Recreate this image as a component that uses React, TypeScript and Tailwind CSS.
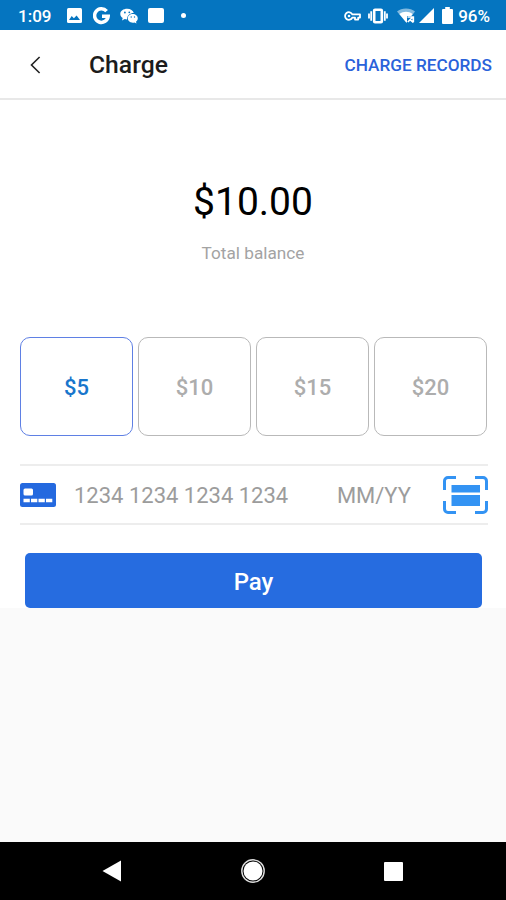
import { useState } from 'react';
import clsx from 'clsx';

const AMOUNTS = [5, 10, 15, 20];

function StatusBar() {
  return (
    <div className="flex h-[30px] items-center bg-[#0575c0] pl-[18px] pr-4 pt-px text-[17px] font-medium leading-none text-white">
      <span className="w-[49px] pt-px">1:09</span>

      {/* Notifications */}
      <svg className="mr-[11px] h-[15px] w-[15px]" viewBox="0 0 15 15" fill="none">
        <rect width="15" height="15" rx="1.5" fill="currentColor" />
        <path d="M2 12 4.7 8l2.2 2.3L9.6 7.5 13 12z" fill="#0575c0" />
      </svg>
      <svg className="mr-2.5 h-[18px] w-[17px]" viewBox="0 0 17 18" fill="none">
        <path d="M13.6 4.2A6.8 6.8 0 1 0 15.2 9.2H9" stroke="currentColor" strokeWidth="3.5" />
      </svg>
      <svg className="mr-2.5 h-4 w-[18px]" viewBox="0 0 18 16" fill="none">
        <path d="M7.2.8C3.3.8.3 3 .3 6c0 1.7.9 3.1 2.4 4.1L2 12.5l2.8-1.4c.7.2 1.5.3 2.2.3C7 7.5 10 5 13.8 5 13.1 2.5 10.5.8 7.2.8z" fill="currentColor" />
        <path d="M17.8 10.3c0-2.4-2.3-4.3-5-4.3-2.9 0-5 1.9-5 4.3s2.1 4.4 5 4.4c.6 0 1.2-.1 1.7-.3l2 1.2-.5-1.9c1.1-.8 1.8-2 1.8-3.400z" fill="currentColor" />
        <g fill="#0575c0">
          <circle cx="4.9" cy="4.5" r=".9" />
          <circle cx="9.3" cy="4.3" r=".9" />
          <circle cx="11.2" cy="9" r=".7" />
          <circle cx="14.5" cy="9" r=".7" />
        </g>
      </svg>
      <span className="mr-[17px] h-[15px] w-4 rounded-[2px] bg-white" />
      <span className="h-[5px] w-[5px] rounded-full bg-white" />

      {/* System */}
      <svg className="ml-auto mr-[7px] h-[10px] w-[17px]" viewBox="0 0 17 10" fill="none" stroke="currentColor" strokeWidth="1.8">
        <path d="M8.3 3.4A3.8 3.8 0 1 0 8.3 6.6h2.7v2h3.2v-2H16V3.4z" strokeLinejoin="round" />
        <circle cx="5" cy="5" r="1.3" fill="currentColor" stroke="none" />
      </svg>
      <svg className="mr-[9px] h-4 w-5" viewBox="0 0 20 16" fill="none" stroke="currentColor">
        <rect x="6.2" y="1.7" width="7.6" height="12.6" rx=".8" strokeWidth="2.6" />
        <path d="M3.2 3.2v9.6M16.8 3.2v9.6" strokeWidth="1.8" />
        <path d="M1 5.5v5M19 5.5v5" strokeWidth="1.8" />
      </svg>
      <svg className="mr-1 h-[15px] w-[18px]" viewBox="0 0 18 15" fill="none">
        <path d="M0 3.5C2.4 1.5 5.5.4 9 .4s6.6 1.1 9 3.1L9.5 14.8z" fill="currentColor" opacity=".5" />
        <path d="M2.4 6C4.4 4.5 6.7 3.8 9 3.8c2.4 0 4.6.7 6.6 2.2L9.5 14.8z" fill="currentColor" />
        <path d="M10 8h8v7h-8z" fill="#0575c0" />
        <path d="M10.5 9h5.8v5M10.8 14l5-5M13 11.5l3.5 3" stroke="currentColor" strokeWidth="1.7" />
      </svg>
      <svg className="mr-[8px] h-[15px] w-[15px]" viewBox="0 0 15 15" fill="currentColor">
        <path d="M15 0v15H0z" />
      </svg>
      <svg className="mr-[5px] h-[17px] w-[11px]" viewBox="0 0 11 17" fill="currentColor">
        <path d="M3.2 0h4.6v2H10a1 1 0 0 1 1 1v13a1 1 0 0 1-1 1H1a1 1 0 0 1-1-1V3a1 1 0 0 1 1-1h2.2z" />
      </svg>
      <span className="pt-px">96%</span>
    </div>
  );
}

function Header() {
  return (
    <header className="flex h-[70px] items-center border-b-2 border-[#e8e8e8] bg-white pl-[30px] pr-3.5 pt-px">
      <button aria-label="Back">
        <svg className="h-[18px] w-[11px]" viewBox="0 0 11 18" fill="none" stroke="#222" strokeWidth="1.6">
          <path d="M9.6 1 1.5 9l8.1 8" />
        </svg>
      </button>
      <h1 className="ml-12 pt-0.5 text-[24.7px] font-medium leading-none text-[#1c1c1c]">Charge</h1>
      <button className="ml-auto pt-0.5 text-[17.2px] font-medium leading-none text-[#2a62da]">CHARGE RECORDS</button>
    </header>
  );
}

function CardRow() {
  return (
    <div className="ml-5 mr-[18px] mt-7 flex h-[61px] items-center border-y-2 border-[#ededed] text-[22px] leading-none text-[#9c9c9c]">
      <svg className="h-6 w-9 shrink-0" viewBox="0 0 36 24">
        <rect width="36" height="24" rx="2.5" fill="#2469df" />
        <rect x="3.5" y="5.5" width="9.5" height="7" rx="1.5" fill="#fff" />
        <path d="M3.5 17.5h29" stroke="#fff" strokeWidth="3.5" strokeDasharray="6.3 1.2" />
      </svg>
      <span className="ml-[18px] pt-0.5">1234 1234 1234 1234</span>
      <span className="ml-auto mr-[32px] pt-0.5">MM/YY</span>
      <svg className="h-[38px] w-[45px] shrink-0" viewBox="0 0 45 38" fill="none">
        <path
          d="M1.5 14V5A3.5 3.5 0 0 1 5 1.5h8M32 1.5h8A3.5 3.5 0 0 1 43.5 5v9M43.5 25v8a3.5 3.5 0 0 1-3.5 3.5h-8M13 36.5H5A3.5 3.5 0 0 1 1.5 33v-8"
          stroke="#3393f3"
          strokeWidth="3"
        />
        <path d="M8.500 9H37v7.500H8.500zM8.500 19H37v11H8.500z" fill="#3393f3" />
      </svg>
    </div>
  );
}

function NavBar() {
  return (
    <nav className="flex h-[58px] items-center justify-between bg-black pl-[102px] pr-[103px] text-white">
      <svg className="h-[22px] w-[19px]" viewBox="0 0 19 22" fill="currentColor">
        <path d="M19 .5v21L.5 11z" />
      </svg>
      <svg className="h-6 w-6" viewBox="0 0 24 24" fill="none">
        <circle cx="12" cy="12" r="11.2" stroke="#ddd" strokeWidth="1.4" />
        <circle cx="12" cy="12" r="9.5" fill="currentColor" />
      </svg>
      <span className="h-[19px] w-[19px] rounded-[1px] bg-white" />
    </nav>
  );
}

export default function App() {
  const [selected, setSelected] = useState(5);

  return (
    <div className="flex h-[900px] w-[506px] flex-col overflow-hidden bg-[#fafafa] font-[Roboto,sans-serif]">
      <StatusBar />
      <Header />

      <main className="flex-1">
        <div className="h-[508px] bg-white pt-[81px]">
          <div className="text-center">
            <p className="text-[39px] leading-[42px] text-black">$10.00</p>
            <p className="mt-5 text-[17.2px] leading-5 text-[#a3a3a3]">Total balance</p>
          </div>

          <div className="ml-5 mr-[19px] mt-[74px] grid grid-cols-4 gap-[5px]">
            {AMOUNTS.map((amount) => (
              <button
                key={amount}
                onClick={() => setSelected(amount)}
                className={clsx(
                  'h-[99px] rounded-[10px] border pt-0.5 text-[22px] font-medium',
                  amount === selected ? 'border-[#5f80e4] text-[#1976cc]' : 'border-[#b9b9b9] text-[#adadad]'
                )}
              >
                ${amount}
              </button>
            ))}
          </div>

          <CardRow />

          <button className="mx-[25px] mt-7 block h-[55px] w-[457px] rounded-[5px] bg-[#266ce0] pt-0.5 text-2xl font-medium text-white">
            Pay
          </button>
        </div>
      </main>

      <NavBar />
    </div>
  );
}
